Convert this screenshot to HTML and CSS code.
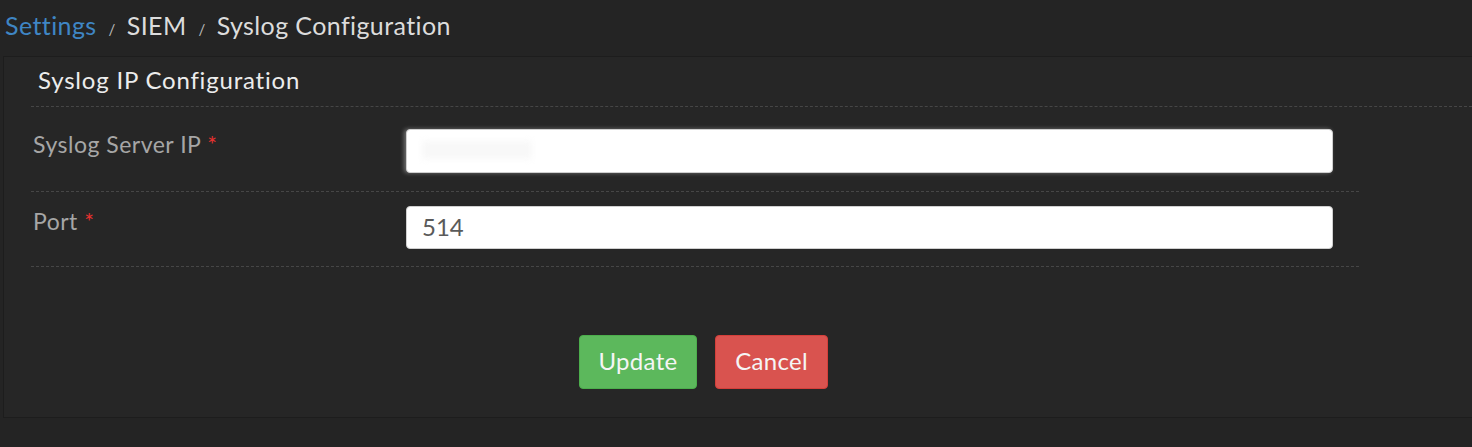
FILE: index.html
```html
<!DOCTYPE html>
<html lang="en">
<head>
<meta charset="utf-8">
<title>Syslog Configuration</title>
<link rel="stylesheet" href="styles.css">
</head>
<body>
<nav class="breadcrumb">
  <a class="crumb-link" href="#">Settings</a>
  <span class="sep">/</span>
  <span class="crumb">SIEM</span>
  <span class="sep">/</span>
  <span class="crumb">Syslog Configuration</span>
</nav>
<section class="panel">
  <h2 class="panel-title">Syslog IP Configuration</h2>
  <form class="form">
    <div class="row row-first">
      <label class="label">Syslog Server IP <span class="req">*</span></label>
      <div class="input redacted"><span class="blur"></span></div>
    </div>
    <div class="row row-second">
      <label class="label">Port <span class="req">*</span></label>
      <div class="input">514</div>
    </div>
    <div class="actions">
      <button type="button" class="btn btn-update">Update</button>
      <button type="button" class="btn btn-cancel">Cancel</button>
    </div>
  </form>
</section>
</body>
</html>
```
FILE: styles.css
```css
html, body {
  margin: 0;
  padding: 0;
  background: #242424;
  font-family: Lato, "Noto Sans", "DejaVu Sans", sans-serif;
  height: 447px;
  overflow: hidden;
}

.breadcrumb {
  height: 56px;
  box-sizing: border-box;
  padding: 9px 0 0 5px;
  font-size: 25px;
  letter-spacing: 0.4px;
  line-height: 32px;
  color: #dcdcdc;
  display: flex;
  align-items: baseline;
}

.crumb-link {
  color: #3f86c4;
  text-decoration: none;
}

.sep {
  font-size: 15px;
  color: #bbbbbb;
  margin: 0 11px 0 12px;
}

.panel {
  margin-left: 3px;
  height: 362px;
  box-sizing: border-box;
  background: #262626;
  border: 1px solid #1d1d1d;
  border-right: none;
}

.panel-title {
  margin: 0 0 0 27px;
  height: 50px;
  box-sizing: border-box;
  padding: 8px 0 0 7px;
  font-size: 24px;
  letter-spacing: 0.8px;
  font-weight: normal;
  line-height: 30px;
  color: #ececec;
  border-bottom: 1px dashed #464646;
}

.form {
  margin-left: 27px;
  width: 1328px;
}

.row {
  display: flex;
  align-items: flex-start;
  padding: 14px 0 17px 2px;
  border-bottom: 1px dashed #464646;
}

.row-first {
  padding-top: 22px;
  padding-bottom: 18px;
}

.label {
  width: 373px;
  font-size: 23px;
  letter-spacing: 0.5px;
  line-height: 30px;
  color: #a6a6a6;
}

.req {
  color: #e5312f;
}

.input {
  width: 927px;
  height: 44px;
  box-sizing: border-box;
  background: #ffffff;
  border-radius: 4px;
  border: 1px solid #cfcfcf;
  padding: 0 15px;
  font-size: 24px;
  line-height: 40px;
  color: #5a5a5a;
}

.row-second .input {
  height: 43px;
}

.redacted {
  box-shadow: -2px 0 4px rgba(255, 255, 255, 0.35);
}

.blur {
  display: block;
  width: 110px;
  height: 18px;
  margin-top: 11px;
  background: #f8f8f8;
  filter: blur(3px);
}

.actions {
  display: flex;
  gap: 18px;
  padding: 68px 0 0 548px;
}

.btn {
  height: 54px;
  box-sizing: border-box;
  border: 1px solid transparent;
  border-radius: 4px;
  font-family: Lato, "Noto Sans", "DejaVu Sans", sans-serif;
  font-size: 24px;
  letter-spacing: 0.3px;
  color: #f5f5f5;
  padding: 0 0 4px;
}

.btn-update {
  width: 118px;
  background: #5cb85c;
  border-color: #4cae4c;
}

.btn-cancel {
  width: 113px;
  background: #d9534f;
  border-color: #d43f3a;
}
```
